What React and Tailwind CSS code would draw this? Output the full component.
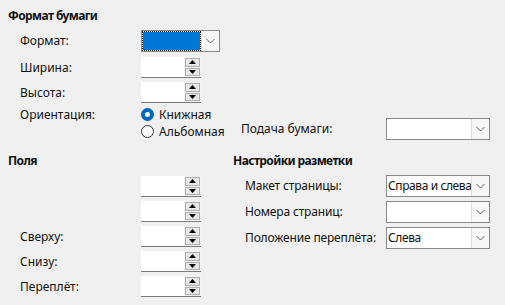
import React from 'react';

const Chevron = () => (
  <svg width="9" height="6" viewBox="0 0 9 6" className="block">
    <path d="M0.5 1 L4.5 5 L8.5 1" fill="none" stroke="#606060" strokeWidth="1" />
  </svg>
);

const Combo = ({ value, width = 'w-[104px]', focused }) => (
  <div className={`${width} h-[22px] flex border border-[#8a8a8a] bg-white`}>
    {focused ? (
      <div className="flex-1 m-[1px] bg-[#0078d7] outline-1 outline-dotted outline-black outline-offset-0" />
    ) : (
      <div className="flex-1 pl-[1px] leading-[20px] whitespace-nowrap overflow-hidden tracking-[-0.4px]">{value}</div>
    )}
    <div className="w-[18px] flex items-center justify-center bg-[#f7f7f7] border-l border-[#dcdcdc]">
      <Chevron />
    </div>
  </div>
);

const Arrow = ({ up }) => (
  <svg width="7" height="4" viewBox="0 0 7 4" className="block">
    <path d={up ? 'M0 4 L3.5 0 L7 4 Z' : 'M0 0 L3.5 4 L7 0 Z'} fill="#000" />
  </svg>
);

const Spin = () => (
  <div className="w-[60px] h-[21px] flex border-b border-[#7a7a7a]">
    <div className="flex-1 bg-white" />
    <div className="w-[17px] bg-[#f4f4f4] flex flex-col items-center justify-center gap-[1px] py-[1px]">
      <div className="w-[15px] h-[9px] bg-[#e8e8e8] border border-[#adadad] flex items-center justify-center">
        <Arrow up />
      </div>
      <div className="w-[15px] h-[9px] bg-[#e8e8e8] border border-[#adadad] flex items-center justify-center">
        <Arrow />
      </div>
    </div>
  </div>
);

const Radio = ({ checked, label }) => (
  <div className="h-[17px] flex items-center gap-[5px]">
    {checked ? (
      <div className="w-[13px] h-[13px] rounded-full bg-[#0067c0] flex items-center justify-center">
        <div className="w-[5px] h-[5px] rounded-full bg-white" />
      </div>
    ) : (
      <div className="w-[13px] h-[13px] rounded-full border border-[#333] bg-[#f8f8f8]" />
    )}
    <span>{label}</span>
  </div>
);

const LeftRow = ({ label, children, className = '' }) => (
  <div className={`flex items-center pl-[12px] ${className}`}>
    <div className="w-[121px]">{label}</div>
    {children}
  </div>
);

const RightRow = ({ label, value, className = '' }) => (
  <div className={`flex items-center pl-[12px] ${className}`}>
    <div className="w-[141px] whitespace-nowrap tracking-[-0.15px]">{label}</div>
    <Combo value={value} />
  </div>
);

export default function App() {
  return (
    <div
      className="w-[505px] h-[305px] bg-[#f0f0f0] text-[12px] text-[#111] overflow-hidden pl-[8px]"
      style={{ fontFamily: '"Noto Sans", "Open Sans", sans-serif' }}
    >
      <div className="pt-[8px] leading-[16px] font-bold tracking-[-0.6px]">Формат бумаги</div>

      <LeftRow label="Формат:" className="mt-[6px] h-[22px]">
        <Combo focused width="w-[79px]" />
      </LeftRow>
      <LeftRow label="Ширина:" className="mt-[5px] h-[21px]">
        <Spin />
      </LeftRow>
      <LeftRow label="Высота:" className="mt-[4px] h-[21px]">
        <Spin />
      </LeftRow>

      <div className="flex mt-[3px] pl-[12px]">
        <div className="w-[121px] leading-[17px]">Ориентация:</div>
        <div className="w-[100px] flex flex-col">
          <Radio checked label="Книжная" />
          <Radio label="Альбомная" />
        </div>
        <div className="flex items-end">
          <div className="flex items-center h-[22px]">
            <div className="w-[145px]">Подача бумаги:</div>
            <Combo />
          </div>
        </div>
      </div>

      <div className="flex mt-[13px]">
        <div className="w-[225px] flex flex-col">
          <div className="leading-[16px] font-bold tracking-[-0.6px]">Поля</div>
          <LeftRow label="" className="mt-[7px] h-[21px]">
            <Spin />
          </LeftRow>
          <LeftRow label="" className="mt-[4px] h-[21px]">
            <Spin />
          </LeftRow>
          <LeftRow label="Сверху:" className="mt-[4px] h-[21px]">
            <Spin />
          </LeftRow>
          <LeftRow label="Снизу:" className="mt-[4px] h-[21px]">
            <Spin />
          </LeftRow>
          <LeftRow label="Переплёт:" className="mt-[4px] h-[21px]">
            <Spin />
          </LeftRow>
        </div>
        <div className="flex flex-col">
          <div className="leading-[16px] font-bold tracking-[-0.6px]">Настройки разметки</div>
          <RightRow label="Макет страницы:" value="Справа и слева" className="mt-[6px]" />
          <RightRow label="Номера страниц:" value="" className="mt-[4px]" />
          <RightRow label="Положение переплёта:" value="Слева" className="mt-[4px]" />
        </div>
      </div>
    </div>
  );
}
